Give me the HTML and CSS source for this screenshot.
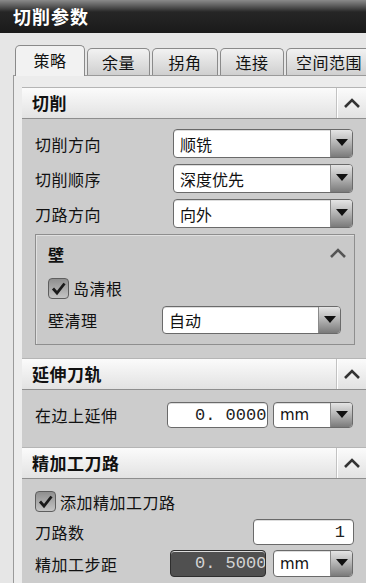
FILE: index.html
```html
<!DOCTYPE html>
<html lang="zh-CN">
<head>
<meta charset="utf-8">
<title>切削参数</title>
<link rel="stylesheet" href="styles.css">
</head>
<body>
<div class="dialog">
  <div class="titlebar">切削参数</div>
  <div class="tabs">
    <div class="tab active t1">策略</div>
    <div class="tab t2">余量</div>
    <div class="tab t3">拐角</div>
    <div class="tab t4">连接</div>
    <div class="tab t5">空间范围</div>
  </div>
  <div class="panel">
    <section class="group">
      <div class="ghead"><span class="gtitle">切削</span><span class="collapse"><svg width="18" height="10" viewBox="0 0 18 10"><path d="M2 9 L9 2 L16 9" fill="none" stroke="#333" stroke-width="2.6"/></svg></span></div>
      <div class="gbody g1">
        <div class="row">
          <span class="label">切削方向</span>
          <div class="combo main"><span class="val">顺铣</span><span class="drop"></span></div>
        </div>
        <div class="row">
          <span class="label">切削顺序</span>
          <div class="combo main"><span class="val">深度优先</span><span class="drop"></span></div>
        </div>
        <div class="row">
          <span class="label">刀路方向</span>
          <div class="combo main"><span class="val">向外</span><span class="drop"></span></div>
        </div>
        <div class="subgroup">
          <div class="shead"><span class="stitle">壁</span><svg class="schev" width="18" height="10" viewBox="0 0 18 10"><path d="M2 9 L9 2 L16 9" fill="none" stroke="#555" stroke-width="2.6"/></svg></div>
          <div class="checkrow">
            <span class="check"><svg width="19" height="19" viewBox="0 0 19 19"><path d="M4 9.5 L8 14 L15.5 4.5" fill="none" stroke="#1a1a1a" stroke-width="2.8"/></svg></span>
            <span class="ctext">岛清根</span>
          </div>
          <div class="row srow">
            <span class="label">壁清理</span>
            <div class="combo sub"><span class="val">自动</span><span class="drop"></span></div>
          </div>
        </div>
      </div>
    </section>
    <section class="group">
      <div class="ghead"><span class="gtitle">延伸刀轨</span><span class="collapse"><svg width="18" height="10" viewBox="0 0 18 10"><path d="M2 9 L9 2 L16 9" fill="none" stroke="#333" stroke-width="2.6"/></svg></span></div>
      <div class="gbody g2">
        <div class="row">
          <span class="label">在边上延伸</span>
          <div class="field num1"><span class="numtext">0. 0000</span></div>
          <div class="combo unit"><span class="val mm">mm</span><span class="drop"></span></div>
        </div>
      </div>
    </section>
    <section class="group">
      <div class="ghead"><span class="gtitle">精加工刀路</span><span class="collapse"><svg width="18" height="10" viewBox="0 0 18 10"><path d="M2 9 L9 2 L16 9" fill="none" stroke="#333" stroke-width="2.6"/></svg></span></div>
      <div class="gbody g3">
        <div class="checkrow top">
          <span class="check"><svg width="19" height="19" viewBox="0 0 19 19"><path d="M4 9.5 L8 14 L15.5 4.5" fill="none" stroke="#1a1a1a" stroke-width="2.8"/></svg></span>
          <span class="ctext">添加精加工刀路</span>
        </div>
        <div class="row r-count">
          <span class="label">刀路数</span>
          <div class="field count"><span class="numtext right">1</span></div>
        </div>
        <div class="row r-step">
          <span class="label">精加工步距</span>
          <div class="field num2"><span class="numtext">0. 5000</span></div>
          <div class="combo unit"><span class="val mm">mm</span><span class="drop"></span></div>
        </div>
      </div>
    </section>
  </div>
</div>
</body>
</html>
```
FILE: styles.css
```css
* { box-sizing: border-box; }
html, body { margin: 0; padding: 0; }
body {
  width: 366px;
  height: 583px;
  overflow: hidden;
  background: #e6e6e6;
  font-family: "Noto Sans CJK SC", "Noto Sans", sans-serif;
  color: #111;
}
.dialog { width: 366px; height: 583px; overflow: hidden; }
.titlebar {
  height: 33px;
  background: linear-gradient(#8a8a8a 0, #5a5a5a 6px, #262626 12px, #1a1a1a 100%);
  color: #fff;
  font-weight: bold;
  font-size: 18px;
  line-height: 33px;
  padding-left: 13px;
  letter-spacing: 1px;
}
.tabs {
  display: flex;
  align-items: flex-end;
  gap: 2px;
  padding-left: 15px;
  height: 42px;
  position: relative;
  z-index: 2;
}
.tab {
  height: 27px;
  border: 1px solid #8a8a8a;
  border-bottom: none;
  border-radius: 5px 5px 0 0;
  background: linear-gradient(#f2f2f2, #cfcfcf);
  font-size: 16px;
  line-height: 26px;
  text-align: center;
  flex: none;
  letter-spacing: 0.5px;
}
.tab.active {
  background: #f2f2f2;
  margin-bottom: -1px;
  height: 31px;
  line-height: 29px;
}
.t1 { width: 70px; }
.t2 { width: 63px; }
.t3 { width: 66px; }
.t4 { width: 64px; }
.t5 { width: 86px; }

.panel {
  margin-left: 13px;
  width: 370px;
  border-left: 1px solid #9a9a9a;
  border-top: 1px solid #9a9a9a;
  background: #ececec;
  padding: 11px 0 0 8px;
  height: 520px;
}
.group {
  width: 350px;
  border-top: 1px solid #b5b5b5;
}
.ghead {
  height: 31px;
  display: flex;
  align-items: center;
  justify-content: space-between;
  background: linear-gradient(#fbfbfb, #e2e2e2);
  border-bottom: 1px solid #8e8e8e;
}
.gtitle {
  font-weight: bold;
  font-size: 17px;
  padding-left: 10px;
  line-height: 30px;
  letter-spacing: 0.5px;
}
.collapse {
  width: 36px;
  height: 30px;
  border-left: 1px solid #c2c2c2;
  box-shadow: inset 1px 0 0 #fff;
  display: flex;
  align-items: center;
  justify-content: flex-start;
  padding-left: 6px;
}
.gbody {
  background: #cccccc;
  padding-left: 13px;
  display: flex;
  flex-direction: column;
}
.g1 { padding-top: 10px; padding-bottom: 13px; gap: 6px; }
.g2 { padding-top: 12px; padding-bottom: 19px; }
.g3 { padding-top: 11px; height: 120px; }

.row {
  display: flex;
  align-items: center;
  height: 29px;
}
.label {
  font-size: 16px;
  line-height: 20px;
  flex: none;
  letter-spacing: 0.5px;
  white-space: nowrap;
}
.combo {
  height: 29px;
  border: 1px solid #6a6a6a;
  border-radius: 4px;
  background: #fff;
  display: flex;
  align-items: center;
  justify-content: space-between;
  overflow: hidden;
  box-shadow: inset 0 1px 0 #ddd;
  flex: none;
}
.combo .val {
  font-size: 16px;
  padding-left: 6px;
  line-height: 20px;
}
.combo .val.mm { padding-left: 6px; font-family: "DejaVu Sans", sans-serif; font-size: 15px; }
.drop {
  width: 22px;
  height: 100%;
  background: linear-gradient(#e4e4e4 0%, #b8b8b8 45%, #7a7a7a 100%);
  border-left: 1px solid #8a8a8a;
  position: relative;
  flex: none;
}
.drop::after {
  content: "";
  position: absolute;
  left: 5px;
  top: 9px;
  border-left: 6px solid transparent;
  border-right: 6px solid transparent;
  border-top: 7px solid #111;
}
.combo.main { width: 180px; }
.g1 > .row .label { width: 138px; }

.subgroup {
  width: 320px;
  border: 1px solid #8e8e8e;
  background: #c9c9c9;
  padding: 0 0 10px 12px;
  box-shadow: inset 1px 1px 0 #e0e0e0;
}
.shead {
  height: 36px;
  display: flex;
  align-items: center;
  justify-content: space-between;
  padding-right: 7px;
}
.stitle { font-weight: bold; font-size: 16px; line-height: 20px; padding-top: 1px; }
.checkrow {
  display: flex;
  align-items: center;
  height: 24px;
  margin-top: 5px;
  gap: 4px;
}
.check {
  width: 21px;
  height: 21px;
  border: 1px solid #5e5e5e;
  border-radius: 4px;
  background: linear-gradient(#8f8f8f, #c4c4c4);
  display: flex;
  align-items: center;
  justify-content: center;
  flex: none;
}
.ctext { font-size: 16px; line-height: 20px; letter-spacing: 0.5px; }
.srow { margin-top: 6px; height: 28px; }
.srow .label { width: 114px; }
.combo.sub { width: 179px; height: 28px; }

.g2 .row { height: 26px; }
.g2 .label { width: 132px; }
.field {
  height: 26px;
  border: 1px solid #6a6a6a;
  border-radius: 4px;
  background: #fff;
  overflow: hidden;
  white-space: pre;
  display: flex;
  align-items: center;
  box-shadow: inset 0 1px 0 #ddd;
  flex: none;
}
.numtext {
  font-family: "Liberation Mono", monospace;
  font-size: 17px;
  color: #222;
  white-space: pre;
}
.num1 { width: 101px; padding-left: 27px; }
.unit { width: 80px; height: 26px; margin-left: 5px; }
.unit .drop::after { top: 8px; }

.checkrow.top { margin-top: 0; height: 23px; gap: 4px; }
.r-count { margin-top: 6px; height: 26px; }
.r-count .label { width: 218px; }
.field.count { width: 101px; justify-content: flex-end; padding-right: 8px; }
.r-step { margin-top: 5px; height: 27px; }
.r-step .label { width: 135px; }
.field.num2 {
  width: 96px;
  height: 27px;
  background: #505050;
  border-color: #2e2e2e;
  padding-left: 24px;
}
.field.num2 .numtext { color: #d4d4d4; }
.r-step .unit { margin-left: 7px; height: 27px; }
```
